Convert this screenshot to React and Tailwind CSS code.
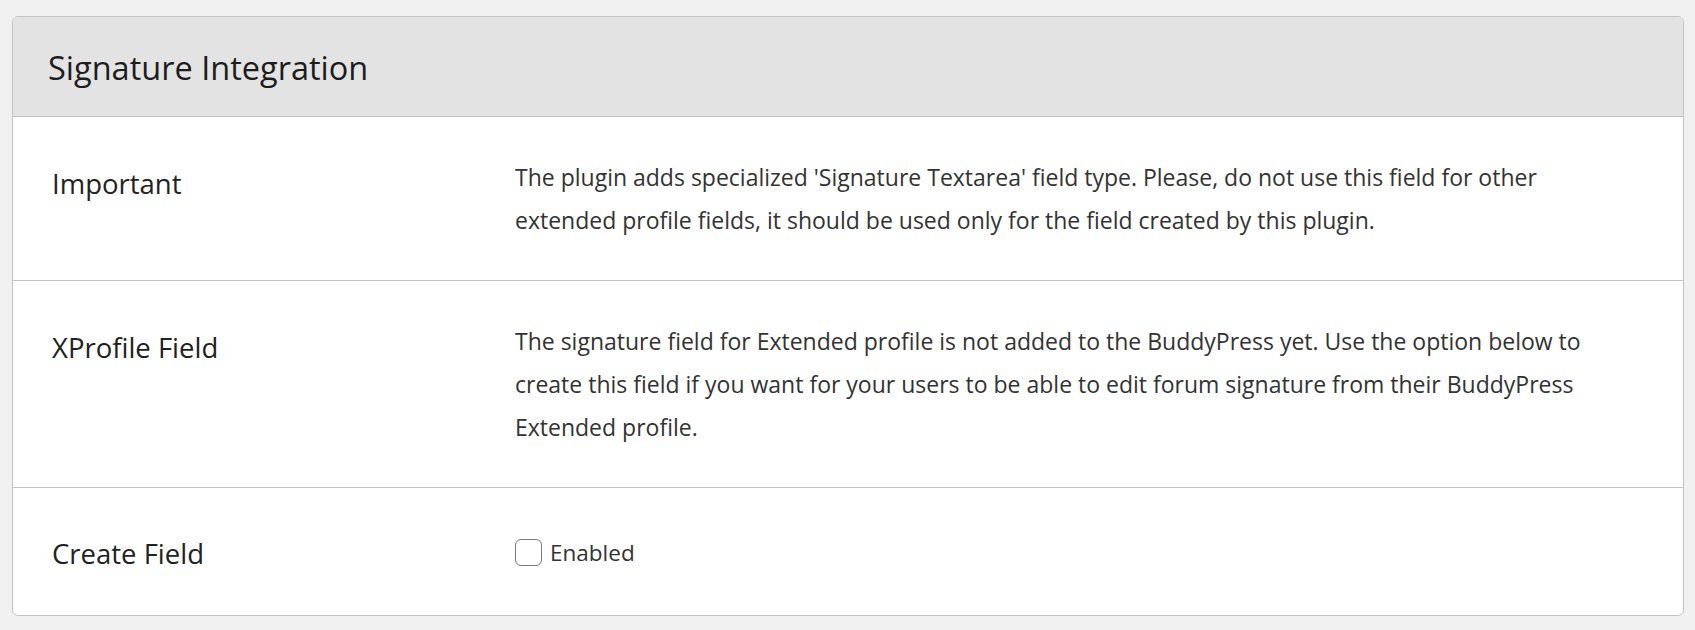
import React, { useState } from "react";

const rows = [
  {
    label: "Important",
    text: "The plugin adds specialized 'Signature Textarea' field type. Please, do not use this field for other extended profile fields, it should be used only for the field created by this plugin.",
  },
  {
    label: "XProfile Field",
    text: "The signature field for Extended profile is not added to the BuddyPress yet. Use the option below to create this field if you want for your users to be able to edit forum signature from their BuddyPress Extended profile.",
  },
];

const App = () => {
  const [enabled, setEnabled] = useState(false);

  return (
    <div className="min-h-screen bg-[#f0f0f0] pt-4 pb-4 pl-3 pr-[11px] font-['Open_Sans',sans-serif]">
      <div className="rounded-md border border-[#c3c3c3] bg-white overflow-hidden">
        {/* Header */}
        <div className="h-[100px] flex items-center pl-[35px] pt-[4px] bg-[#e3e3e3] border-b border-[#c3c3c3]">
          <h2 className="text-[32.5px] text-[#1d1d1d] leading-none">Signature Integration</h2>
        </div>

        {rows.map((row) => (
          <div key={row.label} className="grid grid-cols-[463px_1fr] pl-[39px] pr-[53px] pt-[39px] pb-[38px] border-b border-[#c3c3c3]">
            <div className="pt-[2px] text-[27.5px] leading-[52px] text-[#222]">{row.label}</div>
            <p className="text-[23px] leading-[43px] text-[#333]">{row.text}</p>
          </div>
        ))}

        <div className="grid grid-cols-[463px_1fr] pl-[39px] pr-[53px] pt-[37px] pb-[35px]">
          <div className="pt-[3px] text-[27.5px] leading-[52px] text-[#222]">Create Field</div>
          <label className="flex items-center gap-2 cursor-pointer">
            <input
              type="checkbox"
              checked={enabled}
              onChange={() => setEnabled(!enabled)}
              className="appearance-none w-[27px] h-[27px] rounded-[6px] border-[1.5px] border-[#7a7a7a] bg-white checked:bg-blue-600"
            />
            <span className="text-[22.5px] text-[#333]">Enabled</span>
          </label>
        </div>
      </div>
    </div>
  );
};

export default App;
